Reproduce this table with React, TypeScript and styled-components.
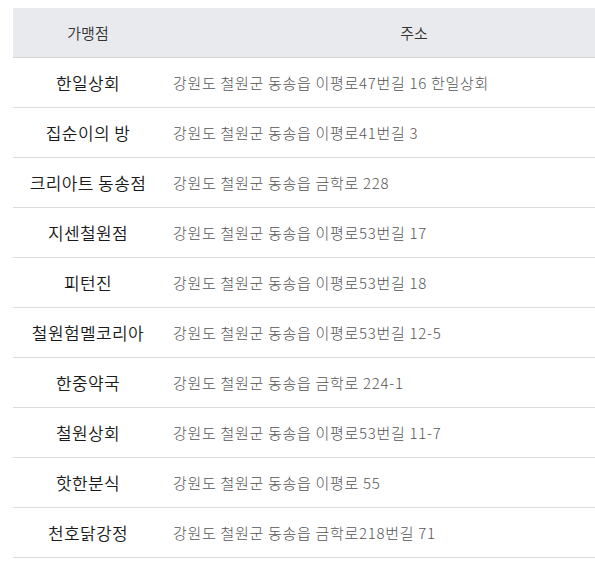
import React from "react";
import styled, { createGlobalStyle } from "styled-components";

const Global = createGlobalStyle`
  html, body { margin: 0; padding: 0; background: #fff; overflow: hidden; }
  body { font-family: "Noto Sans CJK KR", "Noto Sans", sans-serif; }
`;

const Wrap = styled.div`
  padding: 8px 0 0 13px;
  width: 582px;
  overflow: hidden;
`;

const Table = styled.table`
  width: 652px;
  border-collapse: collapse;
  table-layout: fixed;
`;

const Th = styled.th<{ $w?: number }>`
  width: ${(p) => (p.$w ? `${p.$w}px` : "auto")};
  height: 49px;
  padding: 0;
  background: #e9eaee;
  border-bottom: 1px solid #d6d6d6;
  font-size: 15px;
  font-weight: 350;
  color: #333;
  text-align: center;
`;

const Td = styled.td<{ $name?: boolean }>`
  height: 49px;
  padding: ${(p) => (p.$name ? "0" : "0 0 0 10px")};
  border-bottom: 1px solid #dcdcdc;
  font-size: ${(p) => (p.$name ? "17px" : "15px")};
  font-weight: ${(p) => (p.$name ? 350 : 300)};
  letter-spacing: ${(p) => (p.$name ? "0.4px" : "0.7px")};
  color: ${(p) => (p.$name ? "#1a1a1a" : "#555")};
  text-align: ${(p) => (p.$name ? "center" : "left")};
  white-space: nowrap;
`;

const rows: [string, string][] = [
  ["한일상회", "강원도 철원군 동송읍 이평로47번길 16 한일상회"],
  ["집순이의 방", "강원도 철원군 동송읍 이평로41번길 3"],
  ["크리아트 동송점", "강원도 철원군 동송읍 금학로 228"],
  ["지센철원점", "강원도 철원군 동송읍 이평로53번길 17"],
  ["피턴진", "강원도 철원군 동송읍 이평로53번길 18"],
  ["철원험멜코리아", "강원도 철원군 동송읍 이평로53번길 12-5"],
  ["한중약국", "강원도 철원군 동송읍 금학로 224-1"],
  ["철원상회", "강원도 철원군 동송읍 이평로53번길 11-7"],
  ["핫한분식", "강원도 철원군 동송읍 이평로 55"],
  ["천호닭강정", "강원도 철원군 동송읍 금학로218번길 71"],
];

export default function App() {
  return (
    <>
      <Global />
      <Wrap>
        <Table>
          <thead>
            <tr>
              <Th $w={150}>가맹점</Th>
              <Th>주소</Th>
            </tr>
          </thead>
          <tbody>
            {rows.map(([n, a]) => (
              <tr key={n}>
                <Td $name>{n}</Td>
                <Td>{a}</Td>
              </tr>
            ))}
          </tbody>
        </Table>
      </Wrap>
    </>
  );
}
